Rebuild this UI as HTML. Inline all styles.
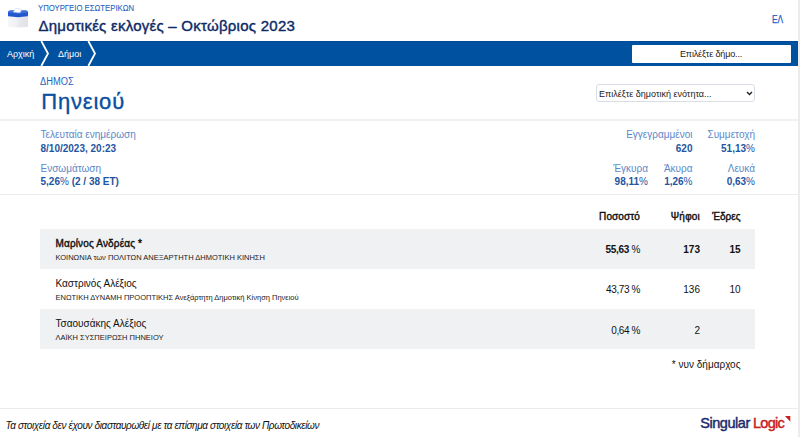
<!DOCTYPE html>
<html><head><meta charset="utf-8">
<style>
*{box-sizing:border-box;margin:0;padding:0}
html,body{width:800px;height:437px;overflow:hidden;background:#fff}
body{font-family:"Liberation Sans",sans-serif;position:relative;color:#222}
.a{position:absolute;white-space:nowrap;line-height:1}
#vline{position:absolute;left:798px;top:0;width:2px;height:437px;background:#ececec}
#nav{position:absolute;left:0;top:41px;width:798px;height:25px;background:#0052a0;box-shadow:inset 0 1px 0 #004a99}
.crumb{color:#fff;font-size:9px}
#btn{position:absolute;left:632px;top:44.5px;width:158.5px;height:18px;background:#fff;border-radius:1px}
#sel{position:absolute;left:596px;top:83.5px;width:159px;height:18.5px;background:#fff;border:1px solid #d9dee5;border-radius:3px}
.hr{position:absolute;left:0;width:798px;height:1px;background:#ebebeb}
.lbl{color:#5c88c8;font-size:10px}
.val{color:#1f55a0;font-size:10px;font-weight:bold}
.row{position:absolute;left:40px;width:715px;height:40px;background:#f0f1f3}
.nm{font-size:10px;color:#111}
.pt{font-size:7.5px;color:#1a1a1a}
.num{font-size:10px;color:#111}
</style></head><body>
<div id="vline"></div>
<!-- header -->
<svg class="a" style="left:0;top:0" width="36" height="36" viewBox="0 0 36 36">
  <defs>
    <linearGradient id="bl" x1="0" y1="0" x2="1" y2="0"><stop offset="0" stop-color="#f6f7f9"/><stop offset="0.45" stop-color="#eef0f3"/><stop offset="0.55" stop-color="#e6e8ec"/><stop offset="1" stop-color="#e1e3e8"/></linearGradient>
  </defs>
  <path d="M8 16.5 L28 16.5 L28 27 L18 27.6 L8 27 Z" fill="url(#bl)"/>
  <path d="M8 12.2 Q8 10.4 10 10.4 L26 10.4 Q28 10.4 28 12.2 L28 16.3 L18 17.2 L8 16.3 Z" fill="#2358cc"/>
  <path d="M8.4 12.4 Q8.6 10.6 10.5 10.6 L25.5 10.6 Q27.4 10.6 27.6 12.4 L18 13.8 Z" fill="#3c74dc"/>
  <path d="M13.4 12 L15.6 8.2 L21.9 9.4 L19.9 12.8 Z" fill="#ffffff" stroke="#c5d3ea" stroke-width="0.5"/>
</svg>
<div class="a" style="left:38.3px;top:3.2px;font-size:9.8px;color:#1f63c0;transform:scaleX(0.79);transform-origin:0 0;-webkit-text-stroke:0.1px #1f63c0">ΥΠΟΥΡΓΕΙΟ ΕΣΩΤΕΡΙΚΩΝ</div>
<div class="a" style="left:38.5px;top:18.3px;font-size:15px;color:#0d2a66;letter-spacing:0.25px;-webkit-text-stroke:0.4px #0d2a66">Δημοτικές εκλογές – Οκτώβριος 2023</div>
<div class="a" style="left:772px;top:13.7px;font-size:10.5px;color:#1f60c0;transform:scaleX(0.8);transform-origin:0 0;-webkit-text-stroke:0.25px #1f60c0">ΕΛ</div>
<!-- nav -->
<div id="nav">
  <div class="a crumb" style="left:7px;top:8.7px">Αρχική</div>
  <svg class="a" style="left:40px;top:0" width="10" height="25"><path d="M1.3 0 L8 12.5 L1.3 25" stroke="#fff" stroke-width="1.8" fill="none"/></svg>
  <div class="a crumb" style="left:58px;top:8.7px">Δήμοι</div>
  <svg class="a" style="left:87px;top:0" width="10" height="25"><path d="M1.3 0 L8 12.5 L1.3 25" stroke="#fff" stroke-width="1.8" fill="none"/></svg>
</div>
<div id="btn"></div>
<div class="a" style="left:680px;top:49.9px;font-size:9px;color:#222;letter-spacing:-0.15px">Επιλέξτε δήμο...</div>
<!-- municipality -->
<div class="a" style="left:40.3px;top:76.6px;font-size:10px;color:#2a5fc0;transform:scaleX(0.93);transform-origin:0 0">ΔΗΜΟΣ</div>
<div class="a" style="left:41.3px;top:91.2px;font-size:22px;color:#0a4fa0;letter-spacing:0.8px;-webkit-text-stroke:0.35px #0a4fa0">Πηνειού</div>
<div id="sel"></div>
<div class="a" style="left:599px;top:90px;font-size:9px;color:#222">Επιλέξτε δημοτική ενότητα...</div>
<svg class="a" style="left:745.5px;top:90.5px" width="7" height="5"><path d="M1 1 L3.5 3.5 L6 1" stroke="#222" stroke-width="1.4" fill="none"/></svg>
<div class="hr" style="top:119px;height:2px;background:#f2f2f2"></div>
<!-- info -->
<div class="a lbl" style="left:40.5px;top:129.5px">Τελευταία ενημέρωση</div>
<div class="a val" style="left:40.5px;top:143.6px">8/10/2023, 20:23</div>
<div class="a lbl" style="left:40.5px;top:163.5px">Ενσωμάτωση</div>
<div class="a val" style="left:40.5px;top:176.7px">5,26<span style="font-weight:normal">%</span> (2 / 38 ET)</div>

<div class="a lbl" style="right:107.5px;top:129.5px">Εγγεγραμμένοι</div>
<div class="a val" style="right:107.5px;top:143.6px">620</div>
<div class="a lbl" style="right:45px;top:129.5px">Συμμετοχή</div>
<div class="a val" style="right:45px;top:143.6px">51,13<span style="font-weight:normal">%</span></div>
<div class="a lbl" style="right:152px;top:163.5px">Έγκυρα</div>
<div class="a val" style="right:152px;top:176.7px">98,11<span style="font-weight:normal">%</span></div>
<div class="a lbl" style="right:107.5px;top:163.5px">Άκυρα</div>
<div class="a val" style="right:107.5px;top:176.7px">1,26<span style="font-weight:normal">%</span></div>
<div class="a lbl" style="right:45px;top:163.5px">Λευκά</div>
<div class="a val" style="right:45px;top:176.7px">0,63<span style="font-weight:normal">%</span></div>
<div class="hr" style="top:194px"></div>
<!-- table -->
<div class="a num" style="right:160px;top:212.2px;-webkit-text-stroke:0.4px #111;letter-spacing:0.1px">Ποσοστό</div>
<div class="a num" style="right:100px;top:212.2px;-webkit-text-stroke:0.4px #111;letter-spacing:0.2px">Ψήφοι</div>
<div class="a num" style="right:59.5px;top:212.2px;-webkit-text-stroke:0.4px #111">Έδρες</div>

<div class="row" style="top:229px"></div>
<div class="a nm" style="left:55.5px;top:238.5px;-webkit-text-stroke:0.4px #111;letter-spacing:0.15px">Μαρίνος Ανδρέας *</div>
<div class="a pt" style="left:55.5px;top:254px">ΚΟΙΝΩΝΙΑ των ΠΟΛΙΤΩΝ ΑΝΕΞΑΡΤΗΤΗ ΔΗΜΟΤΙΚΗ ΚΙΝΗΣΗ</div>
<div class="a num" style="right:160px;top:245.4px;font-weight:bold;letter-spacing:-0.3px">55,63 <span style="font-weight:normal">%</span></div>
<div class="a num" style="right:100px;top:245.4px;font-weight:bold">173</div>
<div class="a num" style="right:59.5px;top:245.4px;font-weight:bold">15</div>

<div class="a nm" style="left:55.5px;top:279px">Καστρινός Αλέξιος</div>
<div class="a pt" style="left:55.5px;top:293.9px">ΕΝΩΤΙΚΗ ΔΥΝΑΜΗ ΠΡΟΟΠΤΙΚΗΣ Ανεξάρτητη Δημοτική Κίνηση Πηνειού</div>
<div class="a num" style="right:160px;top:285.4px;letter-spacing:-0.4px">43,73 %</div>
<div class="a num" style="right:100px;top:285.4px">136</div>
<div class="a num" style="right:59.5px;top:285.4px">10</div>

<div class="row" style="top:309px"></div>
<div class="a nm" style="left:55.5px;top:318.8px">Τσαουσάκης Αλέξιος</div>
<div class="a pt" style="left:55.5px;top:334px">ΛΑΪΚΗ ΣΥΣΠΕΙΡΩΣΗ ΠΗΝΕΙΟΥ</div>
<div class="a num" style="right:160px;top:326px;letter-spacing:-0.4px">0,64 %</div>
<div class="a num" style="right:100px;top:326px">2</div>

<div class="a nm" style="right:59.5px;top:359.6px">* νυν δήμαρχος</div>
<!-- footer -->
<div class="hr" style="top:408px"></div>
<div class="a" style="left:5.5px;top:421px;font-size:10px;font-style:italic;color:#111;letter-spacing:-0.4px">Τα στοιχεία δεν έχουν διασταυρωθεί με τα επίσημα στοιχεία των Πρωτοδικείων</div>
<div class="a" style="left:700.2px;top:415.5px;font-size:14.5px;-webkit-text-stroke:0.45px #1b2a6b;color:#1b2a6b;letter-spacing:-0.45px">Singular</div>
<div class="a" style="left:753px;top:415.5px;font-size:14.5px;-webkit-text-stroke:0.45px #c8201e;color:#c8201e;letter-spacing:-0.7px">Logic</div>
<svg class="a" style="left:785px;top:416px" width="6" height="6"><path d="M0 0 L5.3 0 L5.3 5.8 Z" fill="#c8201e"/></svg>
</body></html>
